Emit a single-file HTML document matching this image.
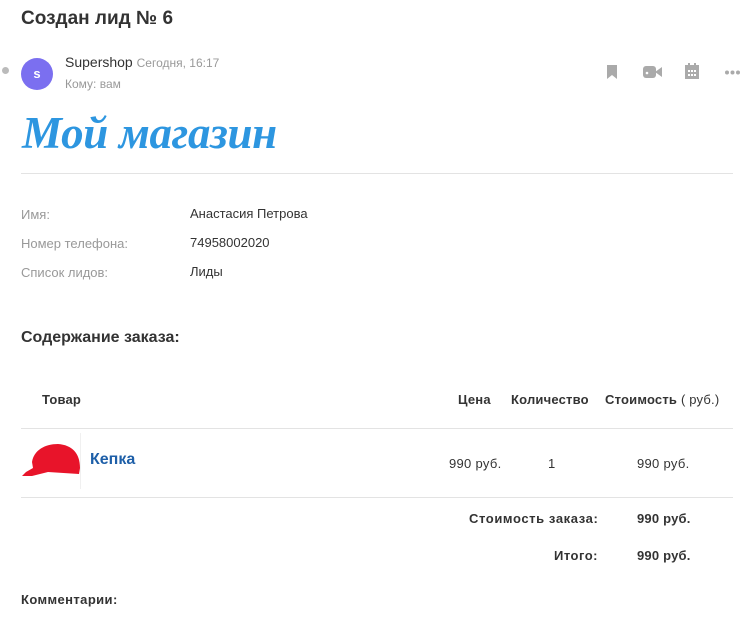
<!DOCTYPE html>
<html><head><meta charset="utf-8"><style>
body{margin:0;width:740px;height:632px;background:#fff;font-family:"Liberation Sans",Arial,sans-serif;position:relative;overflow:hidden;color:#333}
.a{position:absolute;white-space:nowrap}
.l{color:#999;font-size:13px}
.v{color:#333;font-size:13px}
.b{font-weight:bold;font-size:13px;color:#333;letter-spacing:0.2px}
.hr{position:absolute;height:1px;background:#e3e3e3}
</style></head><body>
<div class="a" style="left:21px;top:8px;font-size:19px;font-weight:bold;color:#333">Создан лид № 6</div>
<div class="a" style="left:2px;top:67px;width:7px;height:7px;border-radius:50%;background:#bbb"></div>
<div class="a" style="left:21px;top:58px;width:32px;height:32px;border-radius:50%;background:#7b6ff0;color:#fff;font-size:13px;font-weight:bold;text-align:center;line-height:32px">s</div>
<div class="a" style="left:65px;top:54px;font-size:14px;color:#333">Supershop <span style="color:#999;font-size:12px">Сегодня, 16:17</span></div>
<div class="a" style="left:65px;top:77px;font-size:12px;color:#999">Кому: вам</div>
<svg class="a" style="left:606px;top:65px" width="12" height="14"><path d="M1 0h10v14l-5-4-5 4z" fill="#aaa"/></svg>
<svg class="a" style="left:643px;top:65px" width="19" height="14"><rect x="0" y="1" width="13" height="12" rx="3" fill="#aaa"/><path d="M12 7l7-5v10z" fill="#aaa"/><circle cx="4" cy="8" r="1.3" fill="#fff"/></svg>
<svg class="a" style="left:685px;top:63px" width="14" height="16"><rect x="0" y="2" width="14" height="14" fill="#aaa"/><rect x="3" y="0" width="2" height="4" fill="#aaa"/><rect x="9" y="0" width="2" height="4" fill="#aaa"/><g fill="#fff"><rect x="3" y="7" width="2" height="2"/><rect x="6" y="7" width="2" height="2"/><rect x="9" y="7" width="2" height="2"/><rect x="3" y="11" width="2" height="2"/><rect x="6" y="11" width="2" height="2"/><rect x="9" y="11" width="2" height="2"/></g></svg>
<svg class="a" style="left:725px;top:70px" width="15" height="5"><circle cx="2" cy="2.5" r="2" fill="#aaa"/><circle cx="7.5" cy="2.5" r="2" fill="#aaa"/><circle cx="13" cy="2.5" r="2" fill="#aaa"/></svg>
<div class="a" style="left:22px;top:107px;font-family:'Liberation Serif',serif;font-style:italic;font-weight:bold;font-size:45px;color:#2d96e0;letter-spacing:-0.3px">Мой магазин</div>
<div class="hr" style="left:21px;top:173px;width:712px"></div>
<div class="a l" style="left:21px;top:207px">Имя:</div><div class="a v" style="left:190px;top:206px">Анастасия Петрова</div>
<div class="a l" style="left:21px;top:236px">Номер телефона:</div><div class="a v" style="left:190px;top:235px">74958002020</div>
<div class="a l" style="left:21px;top:265px">Список лидов:</div><div class="a v" style="left:190px;top:264px">Лиды</div>
<div class="a" style="left:21px;top:329px;font-size:16px;font-weight:bold;color:#333">Содержание заказа:</div>
<div class="a b" style="left:42px;top:392px">Товар</div>
<div class="a b" style="left:458px;top:392px">Цена</div>
<div class="a b" style="left:511px;top:392px">Количество</div>
<div class="a b" style="left:605px;top:392px">Стоимость <span style="font-weight:normal">( руб.)</span></div>
<div class="hr" style="left:21px;top:428px;width:712px"></div>
<div class="a" style="left:16px;top:433px;width:64px;height:56px;border-right:1px solid #f0f0f0"></div>
<svg class="a" style="left:0;top:0" width="90" height="490"><path d="M32 462C34 450 45 444 58 444C72 445 80 453 80 468L79 474L48 472L32 476L22 476L26 472L33 468Z" fill="#e8142a"/></svg>
<div class="a" style="left:90px;top:451px;font-size:16px;font-weight:bold;color:#1e5fa8">Кепка</div>
<div class="a v" style="left:449px;top:456px;letter-spacing:0.3px">990 руб.</div>
<div class="a v" style="left:548px;top:456px">1</div>
<div class="a v" style="left:637px;top:456px;letter-spacing:0.3px">990 руб.</div>
<div class="hr" style="left:21px;top:497px;width:712px"></div>
<div class="a b" style="left:469px;top:511px;letter-spacing:0.6px">Стоимость заказа:</div><div class="a b" style="left:637px;top:511px">990 руб.</div>
<div class="a b" style="left:554px;top:548px;letter-spacing:0.5px">Итого:</div><div class="a b" style="left:637px;top:548px">990 руб.</div>
<div class="a b" style="left:21px;top:592px;letter-spacing:0.4px">Комментарии:</div>
</body></html>
